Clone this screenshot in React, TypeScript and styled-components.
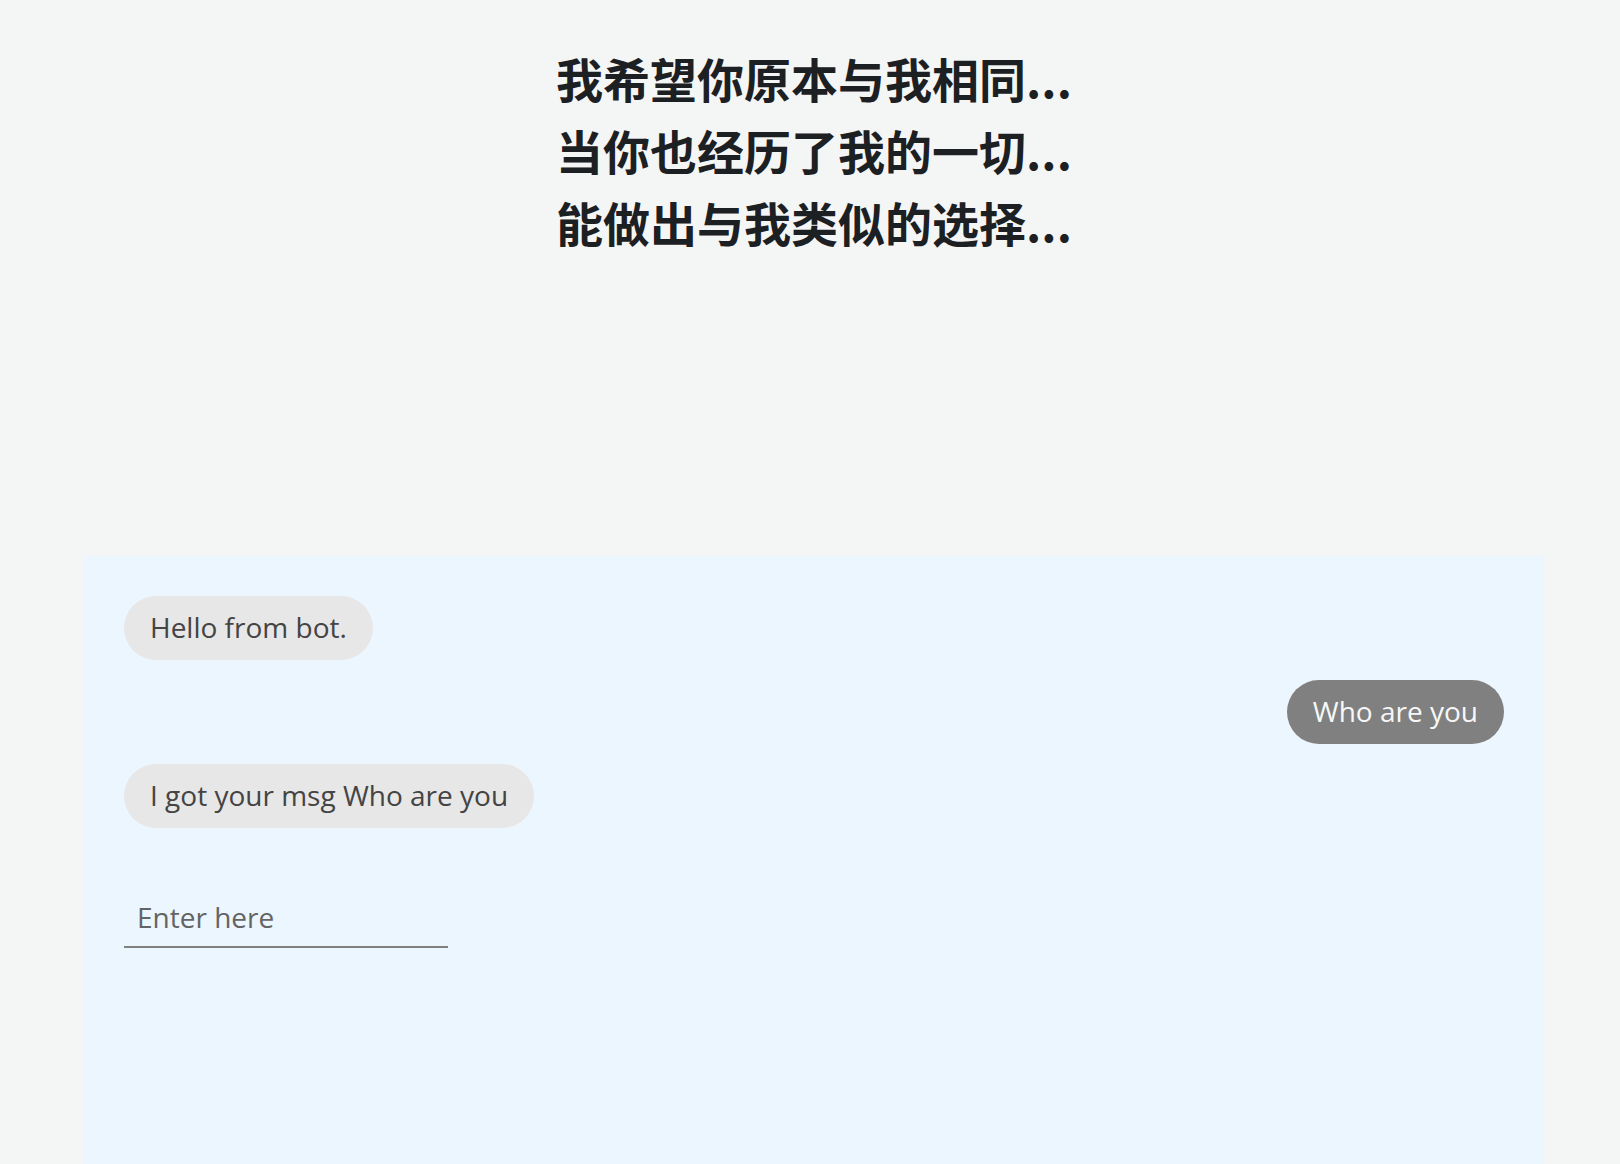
import React from "react";
import styled, { createGlobalStyle } from "styled-components";

const Global = createGlobalStyle`
  html, body {
    margin: 0;
    padding: 0;
    background: #f4f6f5;
    overflow: hidden;
  }
  body {
    font-family: "Open Sans", "Noto Sans CJK SC", sans-serif;
  }
`;

const Page = styled.div`
  width: 1460px;
  margin-left: 84px;
  display: flex;
  flex-direction: column;
`;

const Title = styled.h1`
  margin: 42px 0 0;
  font-family: "Noto Sans CJK SC", "Noto Sans", sans-serif;
  font-size: 47px;
  line-height: 72px;
  font-weight: 700;
  color: #1d2023;
  text-align: center;
`;

const Line = styled.div``;

const ChatPanel = styled.section`
  margin-top: 298px;
  height: 608px;
  background: #ecf6ff;
  padding: 40px;
  box-sizing: border-box;
  display: flex;
  flex-direction: column;
`;

const Messages = styled.div`
  display: flex;
  flex-direction: column;
  gap: 20px;
`;

const Bubble = styled.div<{ $mine?: boolean }>`
  align-self: ${(p) => (p.$mine ? "flex-end" : "flex-start")};
  background: ${(p) => (p.$mine ? "#808080" : "#e7e7e7")};
  color: ${(p) => (p.$mine ? "#f7f7f7" : "#444444")};
  font-family: "Open Sans", sans-serif;
  font-size: 28px;
  line-height: 38px;
  padding: 12px 26px 14px;
  border-radius: 32px;
`;

const Form = styled.form`
  margin-top: 60px;
  display: flex;
`;

const Input = styled.input`
  width: 324px;
  box-sizing: border-box;
  border: none;
  border-bottom: 2px solid #7f8181;
  background: transparent;
  padding: 10px 13px;
  font-family: "Open Sans", sans-serif;
  font-size: 28px;
  line-height: 38px;
  color: #333;
  outline: none;
  &::placeholder {
    color: #646464;
  }
`;

const messages = [
  { text: "Hello from bot.", mine: false },
  { text: "Who are you", mine: true },
  { text: "I got your msg Who are you", mine: false },
];

export default function App() {
  return (
    <>
      <Global />
      <Page>
        <Title>
          <Line>我希望你原本与我相同...</Line>
          <Line>当你也经历了我的一切...</Line>
          <Line>能做出与我类似的选择...</Line>
        </Title>
        <ChatPanel>
          <Messages>
            {messages.map((m, i) => (
              <Bubble key={i} $mine={m.mine}>
                {m.text}
              </Bubble>
            ))}
          </Messages>
          <Form onSubmit={(e) => e.preventDefault()}>
            <Input placeholder="Enter here" />
          </Form>
        </ChatPanel>
      </Page>
    </>
  );
}
